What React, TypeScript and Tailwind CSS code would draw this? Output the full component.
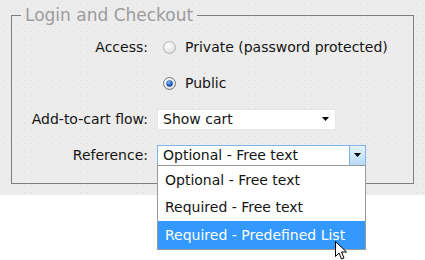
import React from 'react';

const font = { fontFamily: '"DejaVu Sans", "Liberation Sans", sans-serif' };

const Radio = ({ checked }: { checked?: boolean }) => (
  <svg width="13" height="13" viewBox="0 0 13 13" className="shrink-0">
    <defs>
      <radialGradient id={checked ? 'rc' : 'ru'} cx="0.4" cy="0.35" r="0.7">
        <stop offset="0" stopColor="#ffffff" />
        <stop offset="1" stopColor="#dcdcdc" />
      </radialGradient>
      <radialGradient id="dot" cx="0.4" cy="0.35" r="0.7">
        <stop offset="0" stopColor="#8ec3f5" />
        <stop offset="0.6" stopColor="#1f5fb8" />
        <stop offset="1" stopColor="#0d3a80" />
      </radialGradient>
    </defs>
    <circle cx="6.5" cy="6.5" r="6" fill={checked ? 'url(#rc)' : 'url(#ru)'} stroke={checked ? '#6f7a86' : '#b4b4b4'} />
    {checked && <circle cx="6.5" cy="6.5" r="3.2" fill="url(#dot)" />}
  </svg>
);

const Arrow = () => (
  <svg width="8" height="4" viewBox="0 0 8 4">
    <path d="M0 0h7L3.5 4z" fill="#000" />
  </svg>
);

export default function App() {
  return (
    <div className="w-[425px] h-[260px] bg-white text-[#141414] text-[14px]" style={font}>
      <div className="h-[195px] px-[11px] pt-[5px] bg-[#ececec] bg-[radial-gradient(#dcdcdc_0.7px,transparent_1px)] bg-[length:7px_7px]">
        <fieldset className="relative h-[179px] border border-[#7f7f7f] pt-[4px]">
          <legend className="ml-[9px] px-[4px] text-[17px] leading-[20px] text-[#9c9c9c]">Login and Checkout</legend>
          <div className="grid grid-cols-[136px_1fr] gap-x-[9px]">
            <div className="h-[36px] flex items-center justify-end">Access:</div>
            <div className="h-[36px] flex items-center gap-[9px] pl-[6px]">
              <Radio />
              <span>Private (password protected)</span>
            </div>
            <div className="h-[36px]" />
            <div className="h-[36px] flex items-center gap-[9px] pl-[6px]">
              <Radio checked />
              <span>Public</span>
            </div>
            <div className="h-[36px] flex items-center justify-end">Add-to-cart flow:</div>
            <div className="h-[36px] flex items-center">
              <div className="w-[179px] h-[21px] bg-white border border-[#e6e6e6] flex items-center justify-between pl-[5px] pr-[5px]">
                <span>Show cart</span>
                <Arrow />
              </div>
            </div>
            <div className="h-[36px] flex items-center justify-end">Reference:</div>
            <div className="h-[36px] flex items-center relative">
              <div className="w-[209px] h-[21px] bg-white border border-[#7eb4ea] flex items-stretch">
                <span className="flex-1 flex items-center pl-[5px]">Optional - Free text</span>
                <span className="w-[16px] flex items-center justify-center border-l border-[#7eb4ea] bg-gradient-to-b from-[#e6f3fc] to-[#b5dbf5]">
                  <Arrow />
                </span>
              </div>
              <div className="absolute left-0 top-[28px] w-[209px] bg-white border border-[#9a9a9a] z-10">
                <div className="h-[28px] flex items-center pl-[7px]">Optional - Free text</div>
                <div className="h-[27px] flex items-center pl-[7px]">Required - Free text</div>
                <div className="h-[28px] flex items-center pl-[7px] bg-[#3399ff] text-white">Required - Predefined List</div>
                <svg className="absolute left-[177px] top-[75px]" width="13" height="20" viewBox="0 0 13 20">
                  <path d="M0.5 0.5v15l3.5-3.5 2.5 6 2.5-1-2.5-6h5z" fill="#fff" stroke="#000" strokeWidth="1" strokeLinejoin="miter" />
                </svg>
              </div>
            </div>
          </div>
        </fieldset>
      </div>
    </div>
  );
}
